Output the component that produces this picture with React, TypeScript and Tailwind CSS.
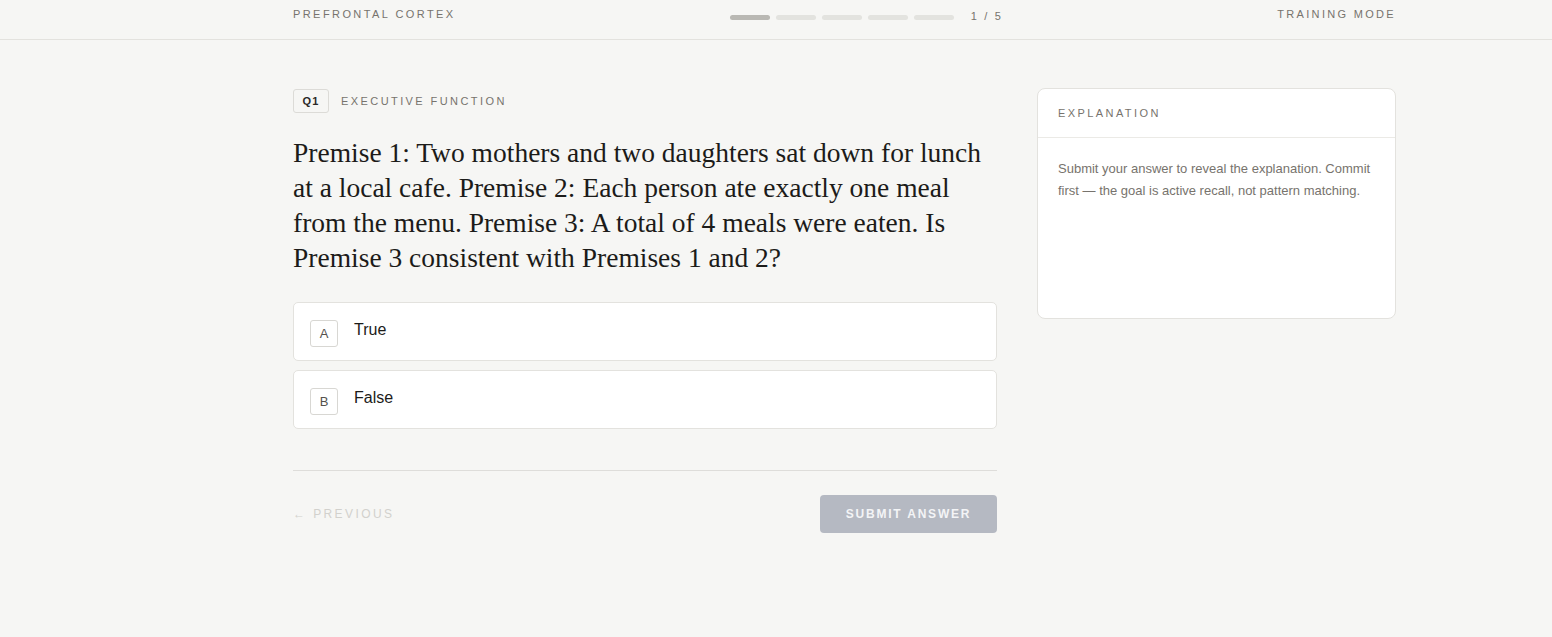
const segments = [0, 1, 2, 3, 4];

const options = [
  { key: "A", label: "True" },
  { key: "B", label: "False" },
];

export default function App() {
  return (
    <div className="min-h-[637px] bg-[#f6f6f4] font-['Liberation_Sans',Arial,sans-serif] text-[#1c1b19]">
      <header className="border-b border-[#e3e2de]">
        <div className="ml-[293px] w-[1103px] h-[39px] flex items-start justify-between pt-[8px]">
          <span className="text-[11px] leading-[13px] tracking-[0.22em] text-[#77736d]">PREFRONTAL CORTEX</span>
          <div className="flex items-center gap-[6px] pt-[4px]">
            {segments.map((i) => (
              <div key={i} className={`h-[5px] w-[40px] rounded-full ${i === 0 ? "bg-[#b9b8b3]" : "bg-[#e3e3df]"}`} />
            ))}
            <span className="ml-[11px] -mt-[2px] text-[11px] leading-[13px] tracking-[0.2em] text-[#77736d]">1 / 5</span>
          </div>
          <span className="text-[11px] leading-[13px] tracking-[0.21em] text-[#77736d]">TRAINING MODE</span>
        </div>
      </header>

      <main className="ml-[293px] w-[1103px] flex gap-[40px] pt-[49px]">
        <section className="w-[704px]">
          <div className="flex items-center gap-[12px]">
            <span className="h-[24px] w-[36px] flex items-center justify-center rounded-[3px] border border-[#dcdbd7] text-[11px] font-semibold tracking-[0.1em] text-[#2a2927]">Q1</span>
            <span className="text-[11px] tracking-[0.22em] text-[#77736d]">EXECUTIVE FUNCTION</span>
          </div>

          <h1 className="mt-[22px] font-['Liberation_Serif','Times_New_Roman',serif] text-[27.5px] leading-[35px] text-[#1c1b19]">
            Premise 1: Two mothers and two daughters sat down for lunch at a local cafe. Premise 2: Each person ate exactly one meal from the menu. Premise 3: A total of 4 meals were eaten. Is Premise 3 consistent with Premises 1 and 2?
          </h1>

          <div className="mt-[27px] flex flex-col gap-[9px]">
            {options.map((o) => (
              <div key={o.key} className="h-[59px] rounded-[5px] border border-[#e3e2de] bg-white flex items-start pl-[16px] pt-[17px] gap-[16px]">
                <span className="h-[27px] w-[28px] flex items-center justify-center rounded-[3px] border border-[#d8d7d3] text-[13px] text-[#55524d]">{o.key}</span>
                <span className="text-[16px] leading-[20px] text-[#1c1b19]">{o.label}</span>
              </div>
            ))}
          </div>

          <div className="mt-[41px] border-t border-[#dedddA]" />

          <div className="mt-[24px] flex items-center justify-between">
            <span className="text-[12px] tracking-[0.2em] text-[#d2d1cd]">← PREVIOUS</span>
            <button className="h-[38px] w-[177px] rounded-[4px] bg-[#b5b9c2] text-[12px] font-bold tracking-[0.15em] text-[#f3f4f6]">SUBMIT ANSWER</button>
          </div>
        </section>

        <aside className="w-[359px] -mt-[1px]">
          <div className="h-[231px] rounded-[8px] border border-[#e3e2de] bg-white">
            <div className="h-[49px] border-b border-[#ebeae6] px-[20px] flex items-center">
              <span className="text-[11px] tracking-[0.22em] text-[#77736d]">EXPLANATION</span>
            </div>
            <p className="px-[20px] pt-[20px] text-[13px] leading-[22px] text-[#77736d]">
              Submit your answer to reveal the explanation. Commit first — the goal is active recall, not pattern matching.
            </p>
          </div>
        </aside>
      </main>
    </div>
  );
}
